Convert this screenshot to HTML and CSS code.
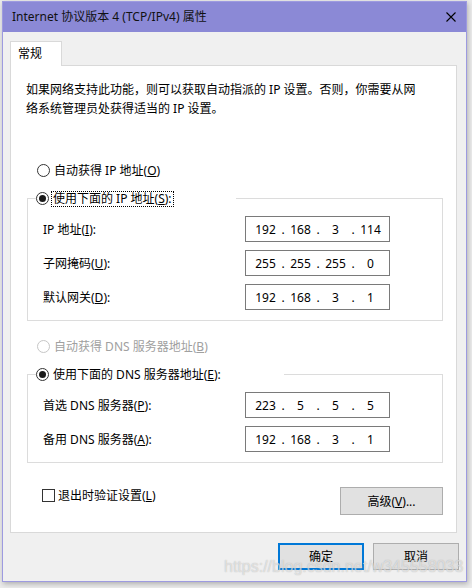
FILE: index.html
```html
<!DOCTYPE html>
<html lang="zh-CN">
<head>
<meta charset="utf-8">
<title>Internet 协议版本 4 (TCP/IPv4) 属性</title>
<link rel="stylesheet" href="styles.css">
</head>
<body>
<div class="window">
  <div class="titlebar">
    <span class="title">Internet 协议版本 4 (TCP/IPv4) 属性</span>
    <svg class="close" width="10" height="10" viewBox="0 0 10 10"><path d="M0.5 0.5L9.5 9.5M9.5 0.5L0.5 9.5" stroke="#000" stroke-width="1.1" fill="none"/></svg>
  </div>
  <div class="client">
    <div class="tabs"><div class="tab">常规</div></div>
    <div class="panel">
      <p class="intro">如果网络支持此功能，则可以获取自动指派的 IP 设置。否则，你需要从网<br>络系统管理员处获得适当的 IP 设置。</p>

      <div class="radio-row top-radio"><span class="radio"></span><span class="rtext">自动获得 IP 地址(<u>O</u>)</span></div>

      <fieldset class="group">
        <legend class="legend legend-ip"><div class="radio-row"><span class="radio checked"></span><span class="rtext focus">使用下面的 IP 地址(<u>S</u>):</span></div></legend>
        <div class="field-row"><span class="label">IP 地址(<u>I</u>):</span>
          <div class="ipbox"><span class="oct">192</span><span class="dot">.</span><span class="oct">168</span><span class="dot">.</span><span class="oct">3</span><span class="dot">.</span><span class="oct">114</span></div></div>
        <div class="field-row"><span class="label">子网掩码(<u>U</u>):</span>
          <div class="ipbox"><span class="oct">255</span><span class="dot">.</span><span class="oct">255</span><span class="dot">.</span><span class="oct">255</span><span class="dot">.</span><span class="oct">0</span></div></div>
        <div class="field-row"><span class="label">默认网关(<u>D</u>):</span>
          <div class="ipbox"><span class="oct">192</span><span class="dot">.</span><span class="oct">168</span><span class="dot">.</span><span class="oct">3</span><span class="dot">.</span><span class="oct">1</span></div></div>
      </fieldset>

      <div class="radio-row mid-radio disabled"><span class="radio"></span><span class="rtext">自动获得 DNS 服务器地址(<u>B</u>)</span></div>

      <fieldset class="group">
        <legend class="legend legend-dns"><div class="radio-row"><span class="radio checked"></span><span class="rtext">使用下面的 DNS 服务器地址(<u>E</u>):</span></div></legend>
        <div class="field-row"><span class="label">首选 DNS 服务器(<u>P</u>):</span>
          <div class="ipbox"><span class="oct">223</span><span class="dot">.</span><span class="oct">5</span><span class="dot">.</span><span class="oct">5</span><span class="dot">.</span><span class="oct">5</span></div></div>
        <div class="field-row"><span class="label">备用 DNS 服务器(<u>A</u>):</span>
          <div class="ipbox"><span class="oct">192</span><span class="dot">.</span><span class="oct">168</span><span class="dot">.</span><span class="oct">3</span><span class="dot">.</span><span class="oct">1</span></div></div>
      </fieldset>

      <div class="check-row">
        <div class="check"><span class="box"></span><span class="ctext">退出时验证设置(<u>L</u>)</span></div>
        <button class="btn btn-adv">高级(<u>V</u>)...</button>
      </div>
    </div>
    <div class="footer">
      <button class="btn btn-default">确定</button>
      <button class="btn">取消</button>
    </div>
  </div>
  <div class="watermark">https://blog.csdn.net/w345558033</div>
</div>
</body>
</html>
```

FILE: styles.css
```css
* { box-sizing: border-box; }
html, body { margin: 0; }
body {
  width: 472px;
  height: 588px;
  overflow: hidden;
  padding: 1px 0 0 2px;
  background: #ebebeb;
  font-family: "Noto Sans", "Noto Sans CJK SC", sans-serif;
  font-size: 12px;
  line-height: 19px;
  color: #000;
}
u { text-decoration: underline; text-underline-offset: 1px; }

.window {
  position: relative;
  width: 465px;
  height: 581px;
  border: 1px solid #9d9ae0;
  background: #f0f0f0;
  box-shadow: 1px 2px 5px rgba(0,0,0,0.25);
}

.titlebar {
  height: 30px;
  background: #8b89d6;
  display: flex;
  align-items: center;
  justify-content: space-between;
  padding: 0 10px 0 9px;
}
.title { line-height: 30px; color: #111; }
.close { display: block; }

.client { padding: 9px 7px 0 7px; }

.tabs { display: flex; }
.tab {
  position: relative;
  z-index: 1;
  width: 52px;
  height: 25px;
  margin-bottom: -1px;
  border: 1px solid #d9d9d9;
  border-bottom: none;
  background: #fff;
  padding: 2px 0 0 7px;
  line-height: 19px;
}

.panel {
  width: 447px;
  height: 468px;
  border: 1px solid #d9d9d9;
  background: #fff;
}

.intro {
  margin: 14px 0 0 15px;
  line-height: 19px;
}

.radio-row {
  display: flex;
  align-items: center;
  height: 19px;
  white-space: nowrap;
}
.top-radio { margin: 43px 0 0 26px; }
.mid-radio { margin: 16px 0 0 26px; }

.radio {
  flex: 0 0 13px;
  width: 13px;
  height: 13px;
  border: 1px solid #333;
  border-radius: 50%;
  background: #fff;
  display: flex;
  align-items: center;
  justify-content: center;
}
.radio.checked::after {
  content: "";
  width: 7px;
  height: 7px;
  border-radius: 50%;
  background: #1a1a1a;
}
.rtext {
  margin-left: 2px;
  padding: 0 1px;
  border: 1px solid transparent;
  line-height: 14px;
}
.rtext.focus { border: 1px dotted #000; }
.disabled .radio { border-color: #c6c6c6; }
.disabled .rtext { color: #a0a0a0; }

.group {
  margin: 9px 0 0 16px;
  width: 416px;
  min-width: 0;
  border: 1px solid #dcdcdc;
  padding: 8px 0 10px 0;
}
.legend {
  margin-left: 8px;
  padding: 0;
  height: 19px;
}
.legend-ip { width: 200px; }
.legend-dns { width: 248px; }

.field-row {
  display: flex;
  align-items: center;
  height: 26px;
  padding-left: 15px;
}
.field-row + .field-row { margin-top: 8px; }
.label { flex: 0 0 202px; white-space: nowrap; }

.ipbox {
  width: 145px;
  height: 26px;
  border: 1px solid #7a7a7a;
  background: #fff;
  display: flex;
  align-items: center;
  padding-left: 5px;
}
.oct { width: 29px; text-align: center; }
.dot { width: 6px; text-align: center; }

.check-row {
  margin: 24px 0 0 16px;
  width: 416px;
  display: flex;
  justify-content: space-between;
  align-items: flex-start;
}
.check {
  margin-top: 1px;
  padding-left: 15px;
  display: flex;
  align-items: center;
  line-height: 15px;
}
.box {
  width: 13px;
  height: 13px;
  border: 1px solid #333;
  background: #fff;
}
.ctext { margin-left: 3px; }

.btn {
  font: inherit;
  color: #000;
  line-height: 19px;
  background: #e1e1e1;
  border: 1px solid #adadad;
  padding: 0;
  margin: 0;
  border-radius: 0;
}
.btn-adv { width: 103px; height: 28px; }

.footer {
  display: flex;
  justify-content: flex-end;
  gap: 9px;
  margin-top: 10px;
}
.footer .btn { width: 86px; height: 27px; }
.btn-default { border: 2px solid #0078d7; }

.watermark {
  position: absolute;
  left: 221px;
  top: 556px;
  font-family: "Liberation Sans", Arial, sans-serif;
  font-size: 16px;
  line-height: 18px;
  color: rgba(255,255,255,0.55);
  text-shadow: 0 0 1px rgba(120,120,120,0.55);
  white-space: nowrap;
  pointer-events: none;
}
```
